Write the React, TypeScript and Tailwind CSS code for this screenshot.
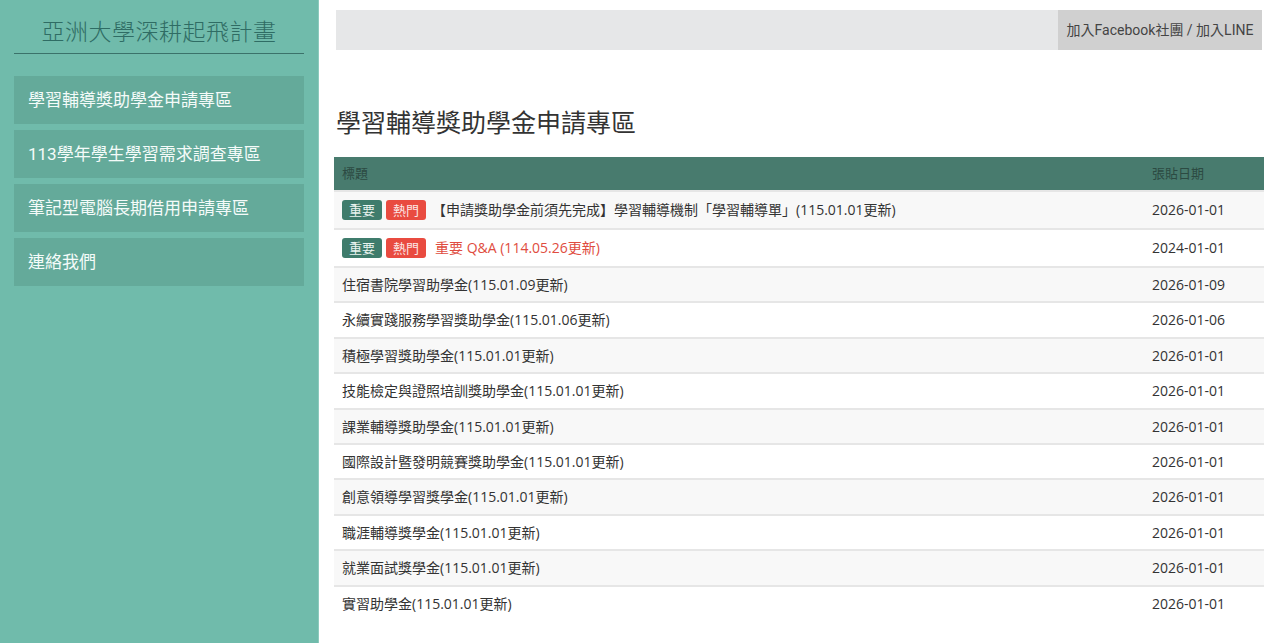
const navItems = [
  "學習輔導獎助學金申請專區",
  "113學年學生學習需求調查專區",
  "筆記型電腦長期借用申請專區",
  "連絡我們",
];

type Post = {
  title: string;
  date: string;
  badges?: boolean;
  red?: boolean;
};

const posts: Post[] = [
  { title: "【申請獎助學金前須先完成】學習輔導機制「學習輔導單」(115.01.01更新)", date: "2026-01-01", badges: true },
  { title: "重要 Q&A (114.05.26更新)", date: "2024-01-01", badges: true, red: true },
  { title: "住宿書院學習助學金(115.01.09更新)", date: "2026-01-09" },
  { title: "永續實踐服務學習獎助學金(115.01.06更新)", date: "2026-01-06" },
  { title: "積極學習獎助學金(115.01.01更新)", date: "2026-01-01" },
  { title: "技能檢定與證照培訓獎助學金(115.01.01更新)", date: "2026-01-01" },
  { title: "課業輔導獎助學金(115.01.01更新)", date: "2026-01-01" },
  { title: "國際設計暨發明競賽獎助學金(115.01.01更新)", date: "2026-01-01" },
  { title: "創意領導學習獎學金(115.01.01更新)", date: "2026-01-01" },
  { title: "職涯輔導獎學金(115.01.01更新)", date: "2026-01-01" },
  { title: "就業面試獎學金(115.01.01更新)", date: "2026-01-01" },
  { title: "實習助學金(115.01.01更新)", date: "2026-01-01" },
];

function Sidebar() {
  return (
    <aside className="w-[319px] shrink-0 bg-[#70bbab] border-r border-[#8ccabd] px-[14px] font-['Roboto','Noto_Sans_CJK_TC',sans-serif]">
      <div className="pt-[18px] pb-[5px] border-b border-[#3b726a] text-center text-[23px] font-light leading-[30px] text-[#2f6c64] tracking-[0.5px]">
        亞洲大學深耕起飛計畫
      </div>
      <nav className="mt-[22px] flex flex-col gap-[6px]">
        {navItems.map((item) => (
          <a
            key={item}
            href="#"
            className="block h-[48px] bg-[#64aa9a] px-[14px] text-[17px] leading-[48px] text-[#f4fbf9]"
          >
            {item}
          </a>
        ))}
      </nav>
    </aside>
  );
}

function Badge({ kind }: { kind: "important" | "hot" }) {
  return (
    <span
      className={
        kind === "important"
          ? "inline-block rounded-[3px] bg-[#3f7c6c] px-[7px] text-[13px] leading-[20px] text-[#e9f3ef]"
          : "inline-block rounded-[3px] bg-[#e94b40] px-[7px] text-[13px] leading-[20px] text-[#fbe7e5]"
      }
    >
      {kind === "important" ? "重要" : "熱門"}
    </span>
  );
}

function PostTable() {
  return (
    <table className="w-full border-collapse text-[14px] text-[#333] font-['Open_Sans','Noto_Sans_CJK_TC',sans-serif]">
      <thead>
        <tr className="bg-[#487b6e]">
          <th className="h-[34px] px-2 text-left font-normal text-[13px] text-[#2c4a42]">標題</th>
          <th className="h-[34px] w-[120px] px-2 text-left font-normal text-[13px] text-[#2c4a42]">張貼日期</th>
        </tr>
      </thead>
      <tbody>
        {posts.map((p, i) => (
          <tr key={p.title} className={i % 2 === 0 ? "bg-[#f8f8f8]" : "bg-white"}>
            <td
              className={
                p.badges
                  ? "border-t-2 border-[#e6e6e6] px-2 py-[8px] leading-[20px]"
                  : "border-t-2 border-[#e6e6e6] px-2 py-[7px] leading-[19.4px]"
              }
            >
              {p.badges ? (
                <div className="flex items-center gap-[4px]">
                  <Badge kind="important" />
                  <Badge kind="hot" />
                  <span className={p.red ? "ml-[5px] text-[#e04c40]" : "ml-[2px]"}>{p.title}</span>
                </div>
              ) : (
                p.title
              )}
            </td>
            <td
              className={
                p.badges
                  ? "border-t-2 border-[#e6e6e6] px-2 py-[8px] leading-[20px]"
                  : "border-t-2 border-[#e6e6e6] px-2 py-[7px] leading-[19.4px]"
              }
            >
              {p.date}
            </td>
          </tr>
        ))}
      </tbody>
    </table>
  );
}

export default function App() {
  return (
    <div className="flex min-h-screen bg-white">
      <Sidebar />
      <main className="flex-1 pl-[15px] pr-[16px]">
        <div className="mx-[2px] mt-[10px] flex h-[40px] justify-end bg-[#e6e7e8]">
          <a
            href="#"
            className="w-[204px] bg-[#d0d0d0] text-center text-[14px] leading-[40px] text-[#444] font-['Roboto','Noto_Sans_CJK_TC',sans-serif]"
          >
            加入Facebook社團 / 加入LINE
          </a>
        </div>
        <h1 className="mx-[2px] mt-[58px] mb-[17px] text-[25px] leading-[32px] text-[#333] font-['Roboto','Noto_Sans_CJK_TC',sans-serif]">
          學習輔導獎助學金申請專區
        </h1>
        <PostTable />
      </main>
    </div>
  );
}
